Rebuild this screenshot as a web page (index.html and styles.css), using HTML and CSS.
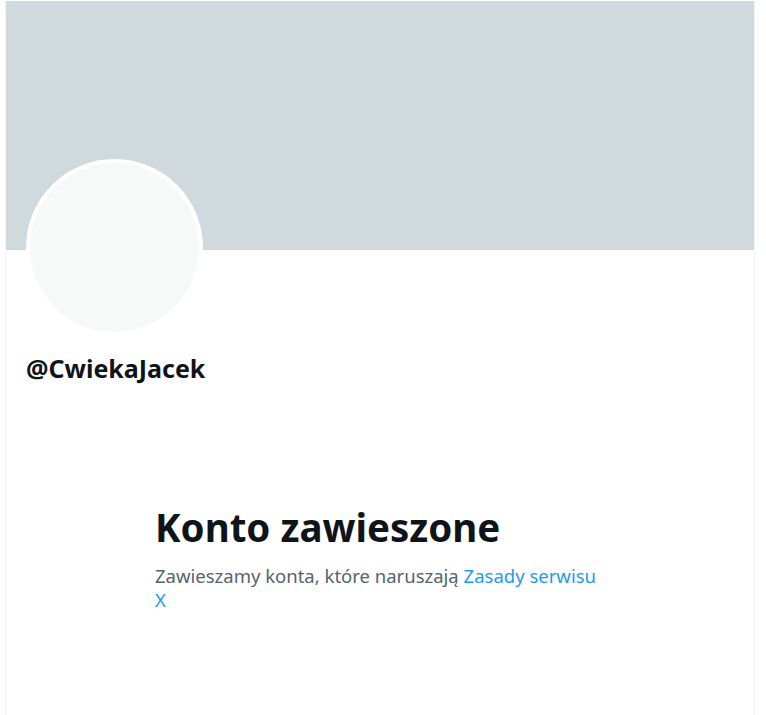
FILE: index.html
```html
<!DOCTYPE html>
<html lang="pl">
<head>
    <meta charset="UTF-8">
    <meta name="viewport" content="width=device-width, initial-scale=1.0">
    <title>@CwiekaJacek</title>
    <link rel="stylesheet" href="styles.css">
</head>
<body>
<!--Column-->
<div class="column">
    <div class="banner"></div>
    <div class="profile">
        <div class="avatar"></div>
        <div class="handle">@CwiekaJacek</div>
    </div>
    <!--Suspended message-->
    <div class="message">
        <h1 class="title">Konto zawieszone</h1>
        <p class="subtitle">
            Zawieszamy konta, które naruszają <a href="#" class="link">Zasady serwisu X</a>
        </p>
    </div>
</div>
</body>
</html>
```
FILE: styles.css
```css
body {
    margin: 0;
    background-color: #fff;
    font-family: "Noto Sans", "Open Sans", sans-serif;
    color: #0f1419;
}
.column {
    margin-left: 5px;
    width: 748px;
    min-height: 100vh;
    padding-top: 1px;
    border-left: 1px solid #eff3f4;
    border-right: 1px solid #eff3f4;
}
.banner {
    height: 249px;
    background-color: #cfd9de;
}
.profile {
    padding: 0 20px;
}
.avatar {
    width: 169px;
    height: 169px;
    margin-top: -91px;
    border: 4px solid #fff;
    border-radius: 50%;
    background-color: #f7f9f9;
}
.handle {
    margin-top: 18px;
    font-size: 25px;
    font-weight: 700;
    line-height: 28px;
}
.message {
    width: 450px;
    margin: 123px auto 0;
}
.title {
    margin: 0;
    font-size: 38.5px;
    font-weight: 700;
    line-height: 44px;
}
.subtitle {
    margin: 15px 0 0;
    padding-right: 5px;
    font-size: 18.5px;
    line-height: 24px;
    color: #536471;
}
.link {
    color: #1d9bf0;
    text-decoration: none;
}
```
